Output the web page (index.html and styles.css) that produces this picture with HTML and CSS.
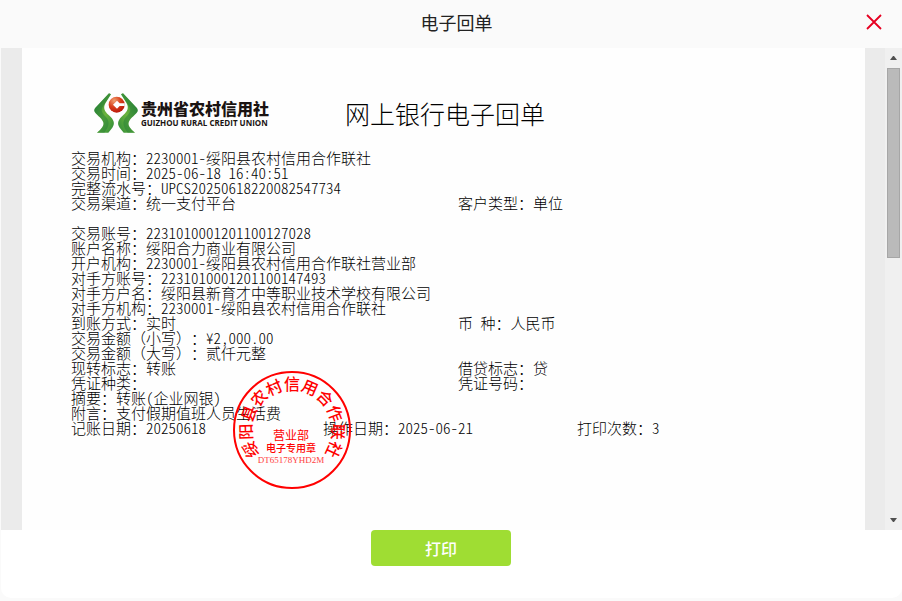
FILE: index.html
```
<!DOCTYPE html>
<html lang="zh-CN">

<head>
    <meta charset="UTF-8">
    <meta name="viewport" content="width=device-width, initial-scale=1.0">
    <title>电子回单</title>
    <link rel="stylesheet" href="styles.css">
</head>

<body>
    <div class="dialog">
        <header class="dialog-header">
            <h1>电子回单</h1>
            <button type="button" class="close" aria-label="关闭">
                <svg width="18" height="18" viewBox="0 0 18 18">
                    <path d="M2 2 L16 16 M16 2 L2 16" fill="none" stroke="#e60021" stroke-width="1.8" />
                </svg>
            </button>
        </header>

        <div class="dialog-body">
            <div class="viewer">
                <div class="paper">
                    <div class="paper-head">
                        <div class="logo">
                            <svg class="logo-mark" viewBox="0 0 132 120">
                                <defs>
                                    <linearGradient id="leaf" x1="0" y1="0" x2="1" y2="1">
                                        <stop offset="0" stop-color="#1d7a35" />
                                        <stop offset="0.55" stop-color="#6cb43c" />
                                        <stop offset="1" stop-color="#2c8a3a" />
                                    </linearGradient>
                                    <radialGradient id="coin" cx="0.35" cy="0.25" r="0.8">
                                        <stop offset="0" stop-color="#f0a070" />
                                        <stop offset="0.5" stop-color="#d9401c" />
                                        <stop offset="1" stop-color="#b81508" />
                                    </radialGradient>
                                    <g id="hand">
                                        <path fill="url(#leaf)" d="M45 1 L51 4 L35 29 C26 44 32 55 44 66 C60 80 64 91 55 104 L43 119 L9 119 C23 108 31 98 28 88 C24 74 4 64 1 54 C0 49 3 45 7 41 Z" />
                                        <path fill="#207a38" d="M45 1 L51 4 L27 40 C18 53 26 62 36 72 C48 85 46 100 31 119 L9 119 C23 108 31 98 28 88 C24 74 4 64 1 54 C0 49 3 45 7 41 Z" opacity="0.45" />
                                    </g>
                                </defs>
                                <use href="#hand" />
                                <use href="#hand" transform="translate(132 0) scale(-1 1)" />
                                <circle cx="68" cy="35" r="24" fill="url(#coin)" />
                                <path fill="#fff" d="M57 35 L69 23 L77 31 L92 31 L92 39 L77 39 L69 47 Z" />
                            </svg>
                            <div class="logo-text">
                                <strong>贵州省农村信用社</strong>
                                <span>GUIZHOU RURAL CREDIT UNION</span>
                            </div>
                        </div>
                        <h2>网上银行电子回单</h2>
                    </div>

                    <div class="receipt">
                        <p class="row"><span>交易机构：2230001-绥阳县农村信用合作联社</span></p>
                        <p class="row"><span>交易时间：2025-06-18 16:40:51</span></p>
                        <p class="row"><span>完整流水号：UPCS20250618220082547734</span></p>
                        <p class="row"><span>交易渠道：统一支付平台</span><span class="right">客户类型：单位</span></p>
                        <p class="row blank"></p>
                        <p class="row"><span>交易账号：2231010001201100127028</span></p>
                        <p class="row"><span>账户名称：绥阳合力商业有限公司</span></p>
                        <p class="row"><span>开户机构：2230001-绥阳县农村信用合作联社营业部</span></p>
                        <p class="row"><span>对手方账号：2231010001201100147493</span></p>
                        <p class="row"><span>对手方户名：绥阳县新育才中等职业技术学校有限公司</span></p>
                        <p class="row"><span>对手方机构：2230001-绥阳县农村信用合作联社</span></p>
                        <p class="row"><span>到账方式：实时</span><span class="right">币 种：人民币</span></p>
                        <p class="row"><span><span class="full">交易金额（小写）：</span>¥2,000.00</span></p>
                        <p class="row"><span><span class="full">交易金额（大写）：</span>贰仟元整</span></p>
                        <p class="row"><span>现转标志：转账</span><span class="right">借贷标志：贷</span></p>
                        <p class="row"><span>凭证种类：</span><span class="right">凭证号码：</span></p>
                        <p class="row"><span>摘要：转账(企业网银)</span></p>
                        <p class="row"><span>附言：支付假期值班人员生活费</span></p>
                        <p class="row"><span>记账日期：20250618</span><span class="middle">操作日期：2025-06-21</span><span class="last">打印次数：3</span></p>
                    </div>

                    <!-- 电子印章 -->
                    <svg class="seal" viewBox="-60 -60 120 120">
                        <circle r="58" fill="none" stroke="#f00" stroke-width="2" />
                        <g class="seal-ring">
                            <text y="-40" transform="rotate(-115)">绥</text>
                            <text y="-40" transform="rotate(-92)">阳</text>
                            <text y="-40" transform="rotate(-69)">县</text>
                            <text y="-40" transform="rotate(-46)">农</text>
                            <text y="-40" transform="rotate(-23)">村</text>
                            <text y="-40">信</text>
                            <text y="-40" transform="rotate(23)">用</text>
                            <text y="-40" transform="rotate(46)">合</text>
                            <text y="-40" transform="rotate(69)">作</text>
                            <text y="-40" transform="rotate(92)">联</text>
                            <text y="-40" transform="rotate(115)">社</text>
                        </g>
                        <text class="seal-dept" x="-1" y="10">营业部</text>
                        <text class="seal-use" x="-1" y="22">电子专用章</text>
                        <text class="seal-code" x="-1" y="33">DT65178YHD2M</text>
                    </svg>
                </div>
            </div>

            <div class="scrollbar">
                <button type="button" class="arrow" aria-label="向上滚动">
                    <svg width="7" height="4" viewBox="0 0 7 4"><path d="M0 4 L3 0 L4 0 L7 4 Z" fill="#505050" /></svg>
                </button>
                <div class="track">
                    <div class="thumb"></div>
                </div>
                <button type="button" class="arrow" aria-label="向下滚动">
                    <svg width="7" height="4" viewBox="0 0 7 4"><path d="M0 0 L7 0 L4 4 L3 4 Z" fill="#505050" /></svg>
                </button>
            </div>
        </div>

        <footer class="dialog-footer">
            <button type="button" class="print">打印</button>
        </footer>
    </div>
</body>

</html>
```

FILE: styles.css
```
* {
    box-sizing: border-box;
}

body {
    margin: 0;
    background-color: #fafafa;
    font-family: "Noto Sans CJK SC", sans-serif;
    color: #000;
}

button {
    padding: 0;
    border: none;
    background: none;
    font-family: inherit;
    cursor: pointer;
}

svg {
    display: block;
}

.dialog {
    display: flex;
    flex-direction: column;
    height: 100vh;
    padding: 0 0 3px 1px;
}

.dialog-header {
    display: flex;
    align-items: center;
    flex: none;
    height: 48px;
    padding: 0 19px 4px 47px;
}

.dialog-header h1 {
    flex: 1;
    margin: 0;
    font-size: 18px;
    font-weight: 400;
    line-height: 24px;
    text-align: center;
    color: #222;
}

.dialog-body {
    display: flex;
    flex: 1;
    min-height: 0;
}

.viewer {
    flex: 1;
    padding: 0 20px 0 21px;
    background-color: #ebebeb;
    overflow: hidden;
}

.paper {
    position: relative;
    height: 100%;
    padding: 44px 48px 0 49px;
    background-color: #fefefe;
}

.paper-head {
    display: flex;
    align-items: center;
    gap: 76px;
    padding-left: 23px;
}

.logo {
    display: flex;
    align-items: center;
    gap: 3px;
}

.logo-mark {
    width: 44px;
    height: 42px;
}

.logo-text {
    display: flex;
    flex-direction: column;
    padding-top: 2px;
    color: #1a1311;
}

.logo-text strong {
    font-size: 16px;
    font-weight: 900;
    line-height: 18px;
}

.logo-text span {
    font-family: "Open Sans", sans-serif;
    font-size: 8px;
    font-weight: 700;
    line-height: 12px;
}

.paper-head h2 {
    margin: 0;
    font-size: 25px;
    font-weight: 300;
    line-height: 34px;
}

.receipt {
    padding-top: 16px;
    font-size: 15px;
    font-weight: 300;
    line-height: 15px;
    font-feature-settings: "hwid";
    white-space: nowrap;
}

.row {
    display: grid;
    grid-template-columns: 252px 135px 119px 1fr;
    margin: 0;
}

.row.blank {
    height: 15px;
}

.full {
    font-feature-settings: normal;
    text-spacing-trim: space-all;
}

.right {
    grid-column: 3;
}

.middle {
    grid-column: 2;
}

.last {
    grid-column: 4;
}

.seal {
    position: absolute;
    top: 322px;
    left: 210px;
    width: 120px;
    height: 120px;
    fill: #f00;
    text-anchor: middle;
}

.seal-ring {
    font-size: 16px;
    font-weight: 500;
}

.seal-dept {
    font-size: 12px;
}

.seal-use {
    font-size: 10px;
    font-weight: 500;
}

.seal-code {
    font-family: "Liberation Serif", serif;
    font-size: 9px;
    fill: #ff4040;
}

.scrollbar {
    display: flex;
    flex-direction: column;
    width: 17px;
    background-color: #f0f0f0;
}

.arrow {
    display: flex;
    align-items: center;
    justify-content: center;
    height: 20px;
}

.track {
    flex: 1;
    padding: 0 2px;
}

.thumb {
    height: 43%;
    border: 1px solid #a6a6a6;
    background-color: #bababa;
}

.dialog-footer {
    flex: none;
    height: 68px;
    padding-right: 21px;
    border-radius: 0 0 10px 10px;
    background-color: #fff;
    text-align: center;
}

.print {
    width: 140px;
    height: 36px;
    border-radius: 4px;
    background-color: #9fdd33;
    color: #fff;
    font-size: 16px;
    font-weight: 500;
}
```
